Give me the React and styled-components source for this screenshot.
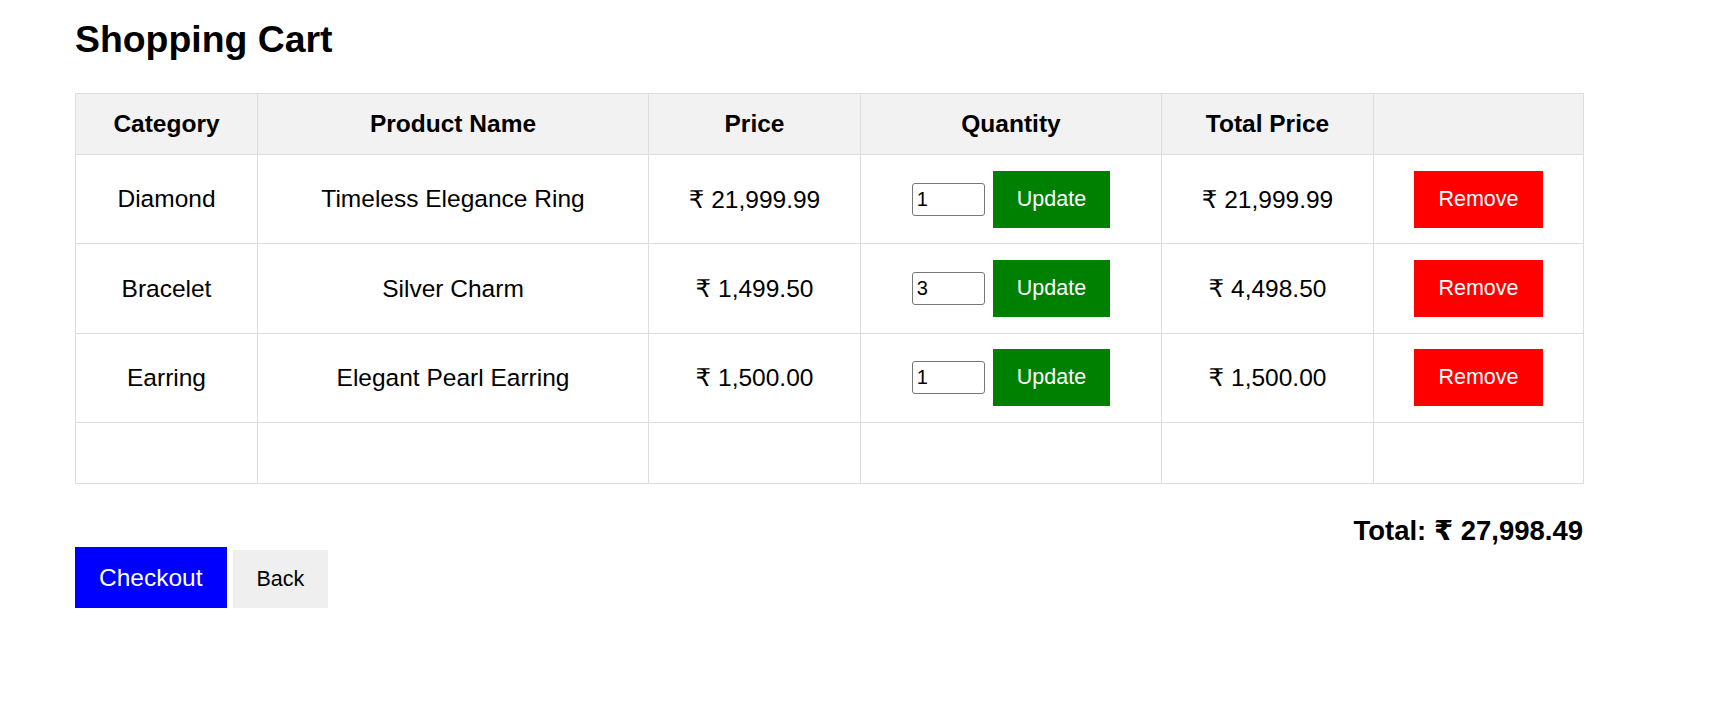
import styled, { createGlobalStyle } from "styled-components";

const GlobalStyle = createGlobalStyle`
body {
  margin: 0;
  background: #fff;
  font-family: "Liberation Sans", Arial, "DejaVu Sans", sans-serif;
  color: #000;
}
`;

const Page = styled.div`
padding: 18px 0 40px 75px;
`;

const Title = styled.h1`
font-size: 37.4px;
font-weight: bold;
margin: 0 0 32px;
line-height: 43px;
`;

const Table = styled.table`
width: 1508px;
border-collapse: collapse;
table-layout: fixed;
font-size: 24.5px;
`;

const Col = styled.col`
width: ${(p) => p.$w}px;
`;

const Th = styled.th`
background-color: #f2f2f2;
border: 1px solid #ddd;
padding: 16px;
height: 28px;
font-weight: bold;
text-align: center;
`;

const Td = styled.td`
border: 1px solid #ddd;
padding: 15.7px 16px;
height: 57px;
text-align: center;
vertical-align: middle;
`;

const EmptyTd = styled(Td)`
padding: 16px;
height: 28px;
`;

const QtyWrap = styled.div`
display: flex;
justify-content: center;
align-items: center;
gap: 8px;
`;

const QtyInput = styled.input`
width: 73px;
height: 33px;
box-sizing: border-box;
border: 1px solid #767676;
border-radius: 3px;
padding: 1px 4px;
font-family: "Liberation Sans", Arial, sans-serif;
font-size: 20px;
`;

const Button = styled.button`
background-color: ${(p) => p.$bg};
color: ${(p) => p.$fg || "#fff"};
border: none;
font-family: "Liberation Sans", Arial, sans-serif;
font-size: ${(p) => p.$size || 21.5}px;
padding: 0 ${(p) => p.$px || 24}px;
height: ${(p) => p.$h || 57}px;
cursor: pointer;
`;

const TotalLine = styled.p`
margin: 31px 0 0;
width: 1508px;
text-align: right;
font-size: 27.5px;
font-weight: bold;
line-height: 32px;
`;

const Actions = styled.div`
display: flex;
align-items: flex-end;
gap: 6px;
`;

const items = [
  { category: "Diamond", name: "Timeless Elegance Ring", price: "21,999.99", qty: 1, total: "21,999.99" },
  { category: "Bracelet", name: "Silver Charm", price: "1,499.50", qty: 3, total: "4,498.50" },
  { category: "Earring", name: "Elegant Pearl Earring", price: "1,500.00", qty: 1, total: "1,500.00" },
];

const widths = [182, 391, 212, 301, 212, 210];

export default function App() {
  return (
    <Page>
      <GlobalStyle />
      <Title>Shopping Cart</Title>
      <Table>
        <colgroup>
          {widths.map((w, i) => (
            <Col key={i} $w={w} />
          ))}
        </colgroup>
        <thead>
          <tr>
            <Th>Category</Th>
            <Th>Product Name</Th>
            <Th>Price</Th>
            <Th>Quantity</Th>
            <Th>Total Price</Th>
            <Th></Th>
          </tr>
        </thead>
        <tbody>
          {items.map((it) => (
            <tr key={it.name}>
              <Td>{it.category}</Td>
              <Td>{it.name}</Td>
              <Td>₹ {it.price}</Td>
              <Td>
                <QtyWrap>
                  <QtyInput type="text" defaultValue={it.qty} />
                  <Button $bg="#008000">Update</Button>
                </QtyWrap>
              </Td>
              <Td>₹ {it.total}</Td>
              <Td>
                <Button $bg="#ff0000" $px={24.5}>Remove</Button>
              </Td>
            </tr>
          ))}
          <tr>
            <EmptyTd>&nbsp;</EmptyTd>
            <EmptyTd></EmptyTd>
            <EmptyTd></EmptyTd>
            <EmptyTd></EmptyTd>
            <EmptyTd></EmptyTd>
            <EmptyTd></EmptyTd>
          </tr>
        </tbody>
      </Table>
      <TotalLine>Total: ₹ 27,998.49</TotalLine>
      <Actions>
        <Button $bg="#0000ff" $size={24.5} $h={61}>Checkout</Button>
        <Button $bg="#efefef" $fg="#000" $h={58}>Back</Button>
      </Actions>
    </Page>
  );
}
